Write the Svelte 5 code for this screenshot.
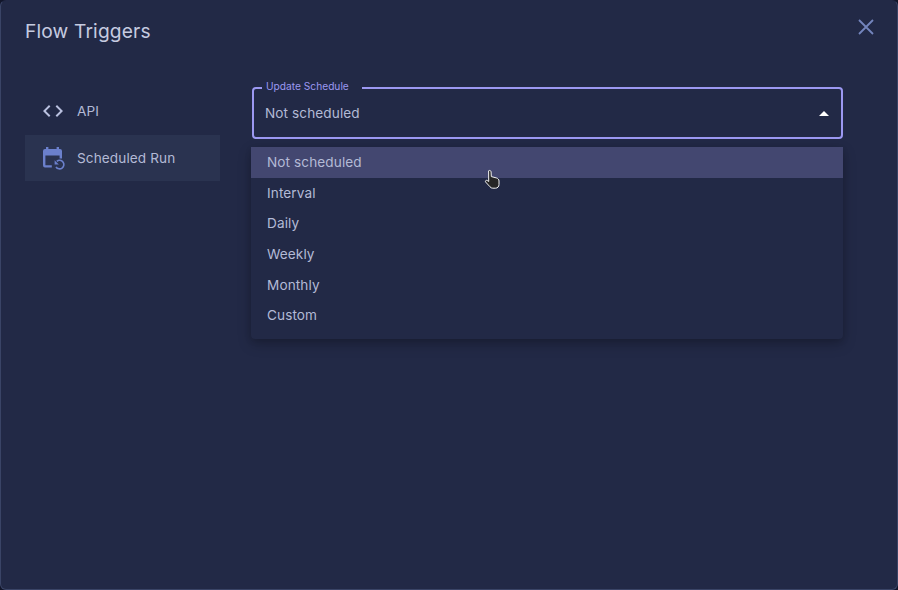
<script>
  let options = ["Not scheduled", "Interval", "Daily", "Weekly", "Monthly", "Custom"];
</script>

<div class="dialog">
  <header class="title-row">
    <h2>Flow Triggers</h2>
    <button class="close" aria-label="Close">
      <svg width="24" height="24" viewBox="0 0 24 24"><path d="M5 5l14 14M19 5L5 19" fill="none" stroke="#7485bd" stroke-width="1.8" /></svg>
    </button>
  </header>

  <div class="body">
    <nav class="sidebar">
      <div class="tab">
        <svg class="tab-icon" width="24" height="24" viewBox="0 0 24 24"><path d="M9.4 16.6 4.8 12l4.600-4.600L8 6l-6 6 6 6zm5.200 0 4.600-4.600-4.600-4.600L16 6l6 6-6 6z" fill="#b9c0df" /></svg>
        <span>API</span>
      </div>
      <div class="tab active">
        <svg class="tab-icon" width="24" height="24" viewBox="0 0 24 24">
          <path d="M5 1h2.400v2h8.200V1H18v2h1a2 2 0 0 1 2 2v7.500h-2.400V9.500H4.400v9.700h6.400v2.400H4a2.400 2.400 0 0 1-2-2.400V5a2 2 0 0 1 2-2h1z" fill="#6b80cc" />
          <path d="M15.800 15.300a4.300 4.300 0 1 1-.8 5.700" fill="none" stroke="#6b80cc" stroke-width="1.600" />
          <path d="M13.600 14.200v4.200h4.200z" fill="#6b80cc" />
        </svg>
        <span>Scheduled Run</span>
      </div>
    </nav>

    <div class="content">
      <div class="field">
        <span class="legend">Update Schedule</span>
        <span class="value">Not scheduled</span>
        <span class="arrow"></span>
      </div>
    </div>
  </div>

  <ul class="menu">
    {#each options as option, i}
      <li class:selected={i === 0}>{option}</li>
    {/each}
  </ul>

  <svg class="cursor" width="18" height="21" viewBox="0 0 18 21">
    <path d="M4.600 1.800c1-.8 2.400-.2 2.500 1l.2 4.800 5 1.300c1.600.4 2.700 1.500 2.700 3.100v3.500c0 2.100-1.500 3.700-3.500 3.700H8.800c-1.300 0-2.100-.5-2.800-1.400L1.600 13c-.7-.9.500-2.200 1.600-1.500l1.500 1z" fill="#262626" stroke="#f2f2f2" stroke-width="1" stroke-linejoin="round" />
  </svg>
</div>

<style>
  :global(body) {
    background: #12162a;
  }

  .dialog {
    position: relative;
    box-sizing: border-box;
    width: 898px;
    height: 590px;
    background: #222946;
    border: 1px solid #3a4466;
    border-top-color: #222946;
    border-radius: 6px;
    font-family: Inter, "Liberation Sans", sans-serif;
    color: #b3bad6;
    overflow: hidden;
  }

  .title-row {
    display: flex;
    justify-content: space-between;
    align-items: center;
    padding: 16px 19px 0 24px;
  }

  h2 {
    margin: 0;
    font-size: 19.2px;
    font-weight: 400;
    line-height: 28px;
    letter-spacing: 0.15px;
    color: #c6cbe0;
  }

  .close {
    display: flex;
    padding: 0;
    background: none;
    border: 0;
    margin-top: -8px;
  }

  .body {
    display: flex;
    gap: 32px;
    padding: 43px 54px 0 24px;
  }

  .sidebar {
    width: 195px;
    flex: none;
  }

  .tab {
    display: flex;
    align-items: center;
    gap: 12px;
    height: 46px;
    padding-left: 16px;
    font-size: 13.6px;
    letter-spacing: 0.1px;
  }

  .tab.active {
    margin-top: 1px;
    background: #2a3350;
  }

  .tab-icon {
    flex: none;
  }

  .content {
    flex: 1;
  }

  .field {
    position: relative;
    box-sizing: border-box;
    display: flex;
    justify-content: space-between;
    align-items: center;
    height: 52px;
    margin-top: -1px;
    padding: 0 12px 0 11px;
    border: 2px solid #9c98f2;
    border-radius: 4px;
    font-size: 13.6px;
  }

  .legend {
    position: absolute;
    top: -10px;
    left: 8px;
    padding: 0 13px 0 4px;
    background: #222946;
    font-size: 10.2px;
    line-height: 14px;
    color: #9c98f2;
  }

  .value {
    letter-spacing: 0.1px;
  }

  .arrow {
    width: 0;
    height: 0;
    border-left: 5px solid transparent;
    border-right: 5px solid transparent;
    border-bottom: 5px solid #fff;
  }

  .menu {
    position: absolute;
    top: 146px;
    left: 250px;
    width: 592px;
    margin: 0;
    padding: 0 0 8px;
    list-style: none;
    background: #222946;
    border-radius: 4px;
    box-shadow: 0 5px 14px rgba(0, 0, 0, 0.22), 0 2px 6px rgba(0, 0, 0, 0.12);
    font-size: 13.6px;
    letter-spacing: 0.1px;
  }

  .menu li {
    height: 30.67px;
    padding-left: 16px;
    line-height: 30.67px;
  }

  .menu li.selected {
    background: #434770;
  }

  .cursor {
    position: absolute;
    top: 168px;
    left: 483px;
  }
</style>
